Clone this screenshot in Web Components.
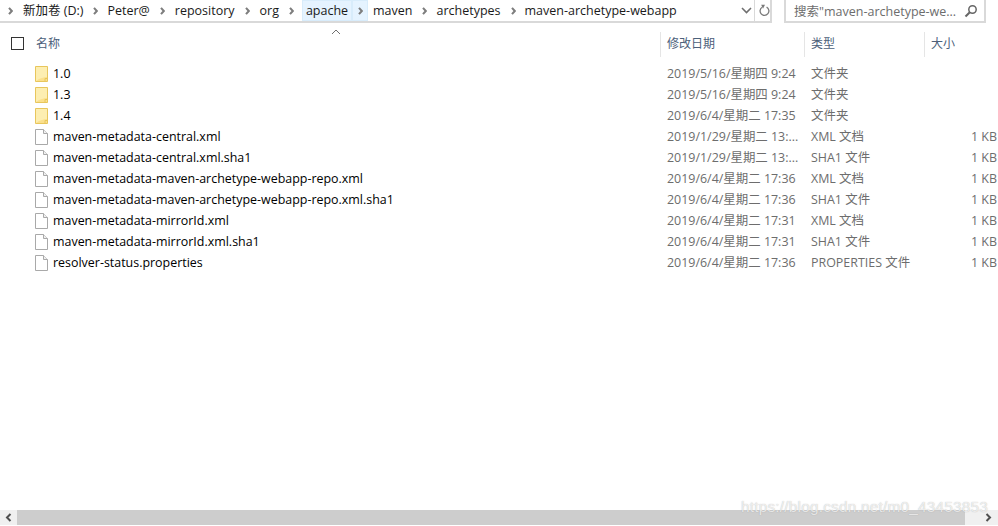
<!DOCTYPE html>
<html><head><meta charset="utf-8">
<style>
html,body{margin:0;padding:0;background:#fff;overflow:hidden}
body{width:998px;height:526px;font:12.45px "Open Sans","Noto Sans CJK SC",sans-serif;color:#000}
</style></head><body>
<explorer-window>
<address-bar slot="top"></address-bar>
<list-header></list-header>
<file-list>
<file-row kind="folder" name="1.0" date="2019/5/16/星期四 9:24" type="文件夹"></file-row>
<file-row kind="folder" name="1.3" date="2019/5/16/星期四 9:24" type="文件夹"></file-row>
<file-row kind="folder" name="1.4" date="2019/6/4/星期二 17:35" type="文件夹"></file-row>
<file-row kind="file" name="maven-metadata-central.xml" date="2019/1/29/星期二 13:..." type="XML 文档" size="1 KB"></file-row>
<file-row kind="file" name="maven-metadata-central.xml.sha1" date="2019/1/29/星期二 13:..." type="SHA1 文件" size="1 KB"></file-row>
<file-row kind="file" name="maven-metadata-maven-archetype-webapp-repo.xml" date="2019/6/4/星期二 17:36" type="XML 文档" size="1 KB"></file-row>
<file-row kind="file" name="maven-metadata-maven-archetype-webapp-repo.xml.sha1" date="2019/6/4/星期二 17:36" type="SHA1 文件" size="1 KB"></file-row>
<file-row kind="file" name="maven-metadata-mirrorId.xml" date="2019/6/4/星期二 17:31" type="XML 文档" size="1 KB"></file-row>
<file-row kind="file" name="maven-metadata-mirrorId.xml.sha1" date="2019/6/4/星期二 17:31" type="SHA1 文件" size="1 KB"></file-row>
<file-row kind="file" name="resolver-status.properties" date="2019/6/4/星期二 17:36" type="PROPERTIES 文件" size="1 KB"></file-row>
</file-list>
<h-scrollbar></h-scrollbar>
</explorer-window>
<script>
function def(name, html){
  customElements.define(name, class extends HTMLElement{
    connectedCallback(){
      if(this.shadowRoot) return;
      const s=this.attachShadow({mode:'open'});
      s.innerHTML=typeof html==='function'?html(this):html;
    }
  });
}
def('explorer-window',`<style>:host{display:flex;flex-direction:column;width:998px;height:526px;position:relative}
.wm{position:absolute;left:741px;top:497px;font:15.4px/20px "Liberation Sans",sans-serif;letter-spacing:.2px;color:rgba(255,255,255,.72);text-shadow:0 0 1px rgba(120,120,120,.55);white-space:nowrap}
</style><slot name="top"></slot><slot></slot><div class="wm">https://blog.csdn.net/m0_43453853</div>`);

const sep=`<svg width="5" height="8" viewBox="0 0 5 8" style="flex:none"><path d="M1 .8 3.8 4 1 7.2" fill="none" stroke="#7d7d7d" stroke-width="2"/></svg>`;
const crumb=(t,ml,mr)=>`<span class="c" style="margin-left:${ml}px;margin-right:${mr}px">${t}</span>`;
def('address-bar',`<style>:host{display:flex;height:23px;background:#fff}
.box{width:772px;height:23px;box-sizing:border-box;border-bottom:2px solid #d9d9d9;border-right:2px solid #d9d9d9;display:flex;align-items:center;padding-left:8px;font-size:12.5px}
.c{color:#1a1a1a;line-height:21px;white-space:nowrap;height:21px}
.s{display:flex;align-items:center;justify-content:center;width:16px;height:21px;box-sizing:border-box;background:#e5f3ff;box-shadow:inset 0 0 0 1px #d8ecfb}
.a{background:#e5f3ff;box-shadow:inset 0 0 0 1px #d8ecfb;width:50px;text-align:center;box-sizing:border-box}
.ctl{margin-left:auto;display:flex;height:21px;align-items:center}
.chev{width:16px;display:flex;justify-content:center}
.ref{width:16px;height:21px;border-left:1px solid #d9d9d9;display:flex;justify-content:center;align-items:center;box-sizing:border-box;padding-left:3px}
.search{margin-left:12px;width:202px;height:23px;box-sizing:border-box;border:solid #d9d9d9;border-width:0 2px 2px 2px;display:flex;align-items:center;padding-left:8px;color:#6d6d6d;font-size:12.5px;position:relative;white-space:nowrap}
.search svg{position:absolute;right:6px;top:4px}
</style>
<div class="box">
${sep}${crumb('新加卷 (D:)',10,10)}${sep}${crumb('Peter@',9,10)}${sep}${crumb('repository',10,10)}${sep}${crumb('org',10,10)}${sep}
<span class="c a" style="margin-left:8px">apache</span><span class="s">${sep}</span>
${crumb('maven',5,10)}${sep}${crumb('archetypes',9,10)}${sep}${crumb('maven-archetype-webapp',9,0)}
<span class="ctl"><span class="chev"><svg width="11" height="7" viewBox="0 0 11 7"><path d="M1 1 5.5 5.5 10 1" fill="none" stroke="#6f6f6f" stroke-width="1.6"/></svg></span>
<span class="ref"><svg width="11" height="13" viewBox="0 0 11 13"><path d="M3.2 3.2A4.4 4.4 0 1 0 7.6 3.1" fill="none" stroke="#7a7a7a" stroke-width="1.3"/><path d="M2.2.7 6 .7 4 4.8z" fill="#7a7a7a"/></svg></span></span>
</div>
<div class="search">搜索"maven-archetype-we...<svg width="14" height="14" viewBox="0 0 14 14"><circle cx="8.5" cy="5.5" r="3.7" fill="none" stroke="#666" stroke-width="1.5"/><path d="M5.8 8.2 1.5 12.5" stroke="#666" stroke-width="2"/></svg></div>`);

def('list-header',`<style>:host{display:flex;height:34px;margin-top:9px;position:relative;color:#4c607a;font-size:12px;line-height:23px}
.cb{width:13px;height:13px;border:1px solid #333;box-sizing:border-box;margin:5px 0 0 11px;flex:none}
.n{width:636px;box-sizing:border-box;padding-left:12px;height:25px}
.h{height:25px;box-sizing:border-box;border-left:1px solid #e5e5e5;padding-left:6px}
svg{position:absolute;left:331px;top:-3px}
</style><span class="cb"></span><span class="n">名称</span><span class="h" style="width:144px">修改日期</span><span class="h" style="width:120px">类型</span><span class="h" style="flex:1">大小</span>
<svg width="10" height="6" viewBox="0 0 10 6"><path d="M1 5 5 1 9 5" fill="none" stroke="#707070" stroke-width="1"/></svg>`);

def('file-list',`<style>:host{display:flex;flex-direction:column;flex:1;min-height:0;margin-top:-3px}</style><slot></slot>`);

const folder=`<svg width="13" height="16" viewBox="0 0 13 16"><path d="M.5.5H12.5V15.5H.5z" fill="#fbe08c" stroke="#e8c65c"/><path d="M1 1H12V11C9 11 5 12 1 15z" fill="#fdeeb1"/><path d="M10 15.5V12.5H12.5" fill="none" stroke="#e8c65c"/></svg>`;
const file=`<svg width="13" height="16" viewBox="0 0 13 16"><path d="M.5.5H8.5L12.5 4.5V15.5H.5z" fill="#fff" stroke="#a9a9a9"/><path d="M8.5.5V4.5H12.5" fill="#f0f0f0" stroke="#a9a9a9"/></svg>`;
def('file-row',h=>`<style>:host{display:flex;height:21px;align-items:center;white-space:nowrap;line-height:21px}
.i{margin-left:35px;width:18px;height:16px;flex:none;display:block}
.n{width:614px;color:#000}
.d{width:144px;color:#6d6d6d;height:21px}
.t{width:146px;color:#6d6d6d;height:21px}
.z{width:40px;text-align:right;color:#6d6d6d;height:21px}
svg{display:block}
</style><span class="i">${h.getAttribute('kind')==='folder'?folder:file}</span><span class="n">${h.getAttribute('name')}</span><span class="d">${h.getAttribute('date')}</span><span class="t">${h.getAttribute('type')}</span><span class="z">${h.getAttribute('size')||''}</span>`);

def('h-scrollbar',`<style>:host{display:flex;height:15px;margin-bottom:1px;background:#f0f0f0}
.b{width:17px;display:flex;align-items:center;justify-content:center}
.t{width:948px;background:#cdcdcd}
.r{flex:1;display:flex;align-items:center;justify-content:flex-end;padding-right:6px}
</style><span class="b"><svg width="7" height="9" viewBox="0 0 7 9"><path d="M5.5 1 2 4.5 5.5 8" fill="none" stroke="#505050" stroke-width="2"/></svg></span><span class="t"></span><span class="r"><svg width="7" height="9" viewBox="0 0 7 9"><path d="M1.5 1 5 4.5 1.5 8" fill="none" stroke="#505050" stroke-width="2"/></svg></span>`);
</script>
</body></html>
